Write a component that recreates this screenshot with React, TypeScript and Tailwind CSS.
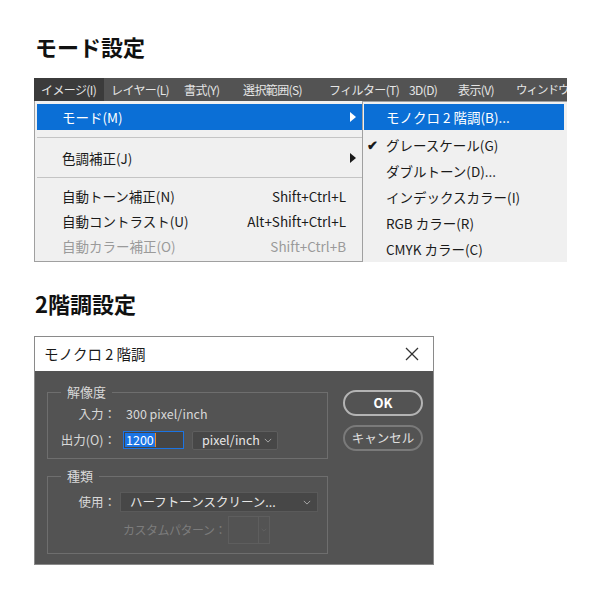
import React from "react";

const F = "font-['Noto_Sans_CJK_JP','Noto_Sans',sans-serif]";

function Chevron({ className = "" }: { className?: string }) {
  return (
    <svg viewBox="0 0 10 6" className={className} fill="none" stroke="currentColor" strokeWidth="1.2">
      <polyline points="1,1 5,5 9,1" />
    </svg>
  );
}

function Arrow({ className = "" }: { className?: string }) {
  return (
    <svg viewBox="0 0 6 10" className={className} fill="currentColor">
      <polygon points="0,0 6,5 0,10" />
    </svg>
  );
}

const barItems: [string, number][] = [
  ["イメージ(I)", 70],
  ["レイヤー(L)", 73],
  ["書式(Y)", 59],
  ["選択範囲(S)", 86],
  ["フィルター(T)", 80],
  ["3D(D)", 49],
  ["表示(V)", 60],
];

function MenuShot() {
  return (
    <div className="ml-[34px] mt-[17px] w-[533px] h-[184px] overflow-hidden flex flex-col">
      <div className="h-[23px] bg-[#535353] flex items-center overflow-hidden whitespace-nowrap">
        {barItems.map(([t, w], i) => (
          <div
            key={t}
            className={`h-full shrink-0 flex items-center pl-[7px] text-[12px] tracking-[-0.6px] text-[#e6e6e6] ${
              i === 0 ? "bg-[#3b3b3b]" : ""
            }`}
            style={{ width: w }}
          >
            {t}
          </div>
        ))}
        <div className="h-full flex-1 flex items-center pl-[5px] text-[11.5px] tracking-[-1px] text-[#e6e6e6]">
          ウィンドウ
        </div>
      </div>
      <div className="flex flex-1">
        <div className="w-[328px] bg-[#f0f0f0] border-l border-b border-[#a0a0a0] pt-[3px] pl-[2px] text-[13.5px] text-[#1a1a1a]">
          <div className="h-[26px] bg-[#0b6fd6] text-white flex items-center pl-[25px] pr-[6px]">
            <span className="flex-1">モード(M)</span>
            <Arrow className="w-[6px] h-[10px]" />
          </div>
          <div className="h-[15px] flex items-center">
            <div className="h-px w-full bg-[#c4c4c4]" />
          </div>
          <div className="h-[26px] flex items-center pl-[25px] pr-[6px]">
            <span className="flex-1">色調補正(J)</span>
            <Arrow className="w-[6px] h-[10px]" />
          </div>
          <div className="h-[13px] flex items-center">
            <div className="h-px w-full bg-[#c4c4c4]" />
          </div>
          {[
            ["自動トーン補正(N)", "Shift+Ctrl+L", false],
            ["自動コントラスト(U)", "Alt+Shift+Ctrl+L", false],
            ["自動カラー補正(O)", "Shift+Ctrl+B", true],
          ].map(([a, b, d]) => (
            <div
              key={a as string}
              className={`h-[25px] flex items-center pl-[25px] pr-[16px] ${d ? "text-[#9a9a9a]" : ""}`}
            >
              <span className="flex-1">{a}</span>
              <span>{b}</span>
            </div>
          ))}
        </div>
        <div className="w-[205px] bg-[#f0f0f0] border-l border-t border-[#a0a0a0] pt-[2px] pl-[1px] pr-[3px] text-[13.5px] text-[#1a1a1a]">
          <div className="h-[26px] bg-[#0b6fd6] text-white flex items-center pl-[22px]">モノクロ 2 階調(B)...</div>
          <div className="h-[2px]" />
          {[
            ["グレースケール(G)", true],
            ["ダブルトーン(D)...", false],
            ["インデックスカラー(I)", false],
            ["RGB カラー(R)", false],
            ["CMYK カラー(C)", false],
          ].map(([t, c]) => (
            <div key={t as string} className="h-[26px] flex items-center relative pl-[22px]">
              {c ? <span className="absolute left-[3px] text-[13px] font-bold">✔</span> : null}
              {t}
            </div>
          ))}
        </div>
      </div>
    </div>
  );
}

function Dialog() {
  return (
    <div className="ml-[34px] mt-[18px] w-[400px] border border-[#8a8a8a] flex flex-col">
      <div className="h-[34px] bg-white flex items-center justify-between pl-[9px] pr-[14px]">
        <span className="text-[14.5px] text-[#1a1a1a]">モノクロ 2 階調</span>
        <svg viewBox="0 0 14 14" className="w-[14px] h-[14px]" stroke="#333" strokeWidth="1.2">
          <line x1="1" y1="1" x2="13" y2="13" />
          <line x1="13" y1="1" x2="1" y2="13" />
        </svg>
      </div>
      <div className="h-[193px] bg-[#535353] flex pl-[12px] pt-[21px] text-[12.5px] text-[#d8d8d8]">
        <div className="w-[281px] flex flex-col">
          <div className="relative h-[67px] border border-[#6e6e6e] pt-[10px]">
            <span className="absolute -top-[10px] left-[13px] px-[6px] bg-[#535353] text-[13px] leading-[18px]">解像度</span>
            <div className="flex items-center h-[22px]">
              <span className="w-[68px] text-right">入力：</span>
              <span className="ml-[10px]">300 pixel/inch</span>
            </div>
            <div className="flex items-center h-[26px] mt-[2px]">
              <span className="w-[68px] text-right">出力(O)：</span>
              <div className="ml-[7px] w-[61px] h-[18px] bg-[#454545] border border-[#1b74e4] flex items-center pl-[1px]">
                <span className="bg-[#1b74e4] text-white leading-[14px] px-[1px]">1200</span>
                <span className="w-px h-[14px] bg-[#f08a24]" />
              </div>
              <div className="ml-[8px] w-[86px] h-[19px] bg-[#474747] border border-[#5e5e5e] rounded-[2px] flex items-center pl-[9px] pr-[5px] text-[#e6e6e6]">
                <span className="flex-1">pixel/inch</span>
                <Chevron className="w-[8px] h-[5px] text-[#aaa]" />
              </div>
            </div>
          </div>
          <div className="relative h-[78px] mt-[17px] border border-[#6e6e6e] pt-[15px]">
            <span className="absolute -top-[10px] left-[13px] px-[6px] bg-[#535353] text-[13px] leading-[18px]">種類</span>
            <div className="flex items-center h-[20px]">
              <span className="w-[68px] text-right">使用：</span>
              <div className="ml-[4px] w-[198px] h-[20px] bg-[#474747] border border-[#5a5a5a] flex items-center pl-[9px] pr-[6px] text-[#e6e6e6]">
                <span className="flex-1">ハーフトーンスクリーン...</span>
                <Chevron className="w-[8px] h-[5px] text-[#aaa]" />
              </div>
            </div>
            <div className="flex items-center h-[28px] mt-[4px] text-[#7c7c7c]">
              <span className="ml-[75px] w-[104px] whitespace-nowrap text-[12px] tracking-[-0.5px]">カスタムパターン：</span>
              <div className="ml-[1px] w-[42px] h-[28px] border border-[#5e5e5e] flex">
                <div className="flex-1" />
                <div className="w-[11px] border-l border-[#5e5e5e] flex items-center justify-center">
                  <Chevron className="w-[6px] h-[4px] text-[#666]" />
                </div>
              </div>
            </div>
          </div>
        </div>
        <div className="ml-[15px] mt-[-2px] flex flex-col gap-[9px]">
          <div className="w-[80px] h-[26px] rounded-full border-2 border-[#b4b4b4] flex items-center justify-center text-white font-bold text-[13px]">
            OK
          </div>
          <div className="w-[80px] h-[26px] rounded-full border-2 border-[#7a7a7a] flex items-center justify-center text-[#e0e0e0] text-[12.5px]">
            キャンセル
          </div>
        </div>
      </div>
    </div>
  );
}

export default function App() {
  return (
    <div className={`w-[600px] h-[600px] bg-white overflow-hidden ${F}`}>
      <div className="pt-[31px] pl-[35px] text-[22px] font-bold leading-[30px] text-[#111]">モード設定</div>
      <MenuShot />
      <div className="mt-[26px] pl-[35px] text-[22px] font-bold leading-[30px] text-[#111]">2階調設定</div>
      <Dialog />
    </div>
  );
}
